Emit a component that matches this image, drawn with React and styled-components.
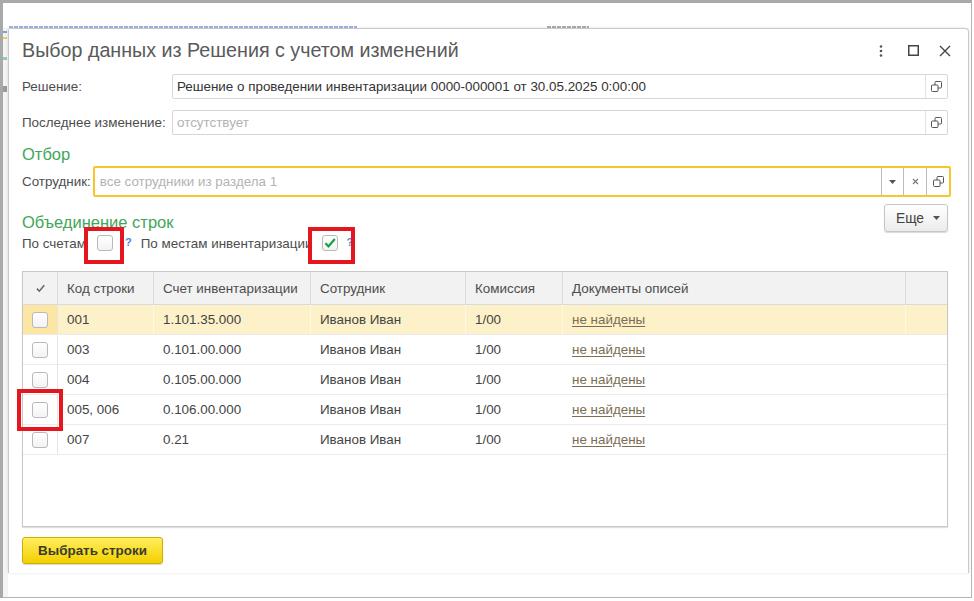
import React from 'react'
import styled, { createGlobalStyle, css } from 'styled-components'

const GlobalStyle = createGlobalStyle`
  html, body {
    margin: 0;
    padding: 0;
  }
  body {
    font-family: "Liberation Sans", Arial, sans-serif;
    font-size: 13.4px;
  }
  * {
    box-sizing: border-box;
  }
`

const Frame = styled.div`
  width: 974px;
  height: 601px;
  background: #fff;
  padding: 0 2px 3px 0;
`
const Screen = styled.div`
  height: 100%;
  background: #fff;
  border-top: 3px solid #a9a9a9;
  border-left: 3px solid #a9a9a9;
  border-right: 1px solid #b4b4b4;
  border-bottom: 1px solid #b4b4b4;
  display: flex;
  flex-direction: column;
  overflow: hidden;
`
const BackTop = styled.div`
  height: 25px;
  flex: none;
  display: flex;
  align-items: flex-end;
  padding-left: 6px;
  gap: 190px;
`
const BackLine = styled.div`
  width: ${p => p.$w}px;
  height: 2px;
  background: repeating-linear-gradient(90deg, ${p => p.$c} 0 4px, transparent 4px 5px);
  opacity: 0.55;
`
const Body = styled.div`
  flex: 1;
  display: flex;
  align-items: flex-start;
`
const LeftStrip = styled.div`
  width: 5px;
  align-self: stretch;
  background: #f4f4f4;
  display: flex;
  flex-direction: column;
  padding-top: 3px;
  gap: 4px;
`
const StripMark = styled.div`
  height: ${p => p.$h}px;
  width: 4px;
  background: ${p => p.$c};
  margin-top: ${p => p.$mt || 0}px;
`
const RightStrip = styled.div`
  width: 2px;
  align-self: stretch;
`

const Dialog = styled.div`
  width: 961px;
  height: 545px;
  flex: none;
  border: 1px solid #c9c9c9;
  border-bottom: none;
  border-radius: 2px 4px 0 0;
  box-shadow: 0 0 3px rgba(0, 0, 0, 0.12);
  padding: 0 20px 0 13px;
  display: flex;
  flex-direction: column;
  color: #4d4d4d;
`
const TitleRow = styled.div`
  height: 43px;
  display: flex;
  align-items: center;
  justify-content: space-between;
  margin-right: -4px;
`
const Title = styled.div`
  font-size: 19.7px;
  color: #5a5a5a;
`
const Controls = styled.div`
  display: flex;
  gap: 18px;
`
const CtrlIcon = styled.span`
  width: 14px;
  height: 14px;
  display: flex;
  align-items: center;
  justify-content: center;
  color: #444;
`

const FieldRow = styled.div`
  display: flex;
  align-items: center;
  margin-top: ${p => p.$mt}px;
`
const Label = styled.div`
  width: ${p => (p.$w ? `${p.$w}px` : 'auto')};
  flex: none;
  color: #4d4d4d;
  white-space: nowrap;
`
const Input = styled.div`
  flex: 1;
  height: ${p => (p.$focus ? 31 : 25)}px;
  display: flex;
  align-items: stretch;
  border: ${p => (p.$focus ? '2px solid #f7c62d' : '1px solid #d6d6d6')};
  border-radius: 2px;
  background: #fff;
  margin-left: ${p => (p.$focus ? 2 : 0)}px;
  margin-right: ${p => (p.$focus ? -3 : 0)}px;
`
const InputText = styled.div`
  flex: 1;
  display: flex;
  align-items: center;
  padding-left: ${p => (p.$focus ? 5 : 4)}px;
  color: ${p => (p.$empty ? '#b3b3b3' : '#333')};
  white-space: nowrap;
  overflow: hidden;
`
const InputBtn = styled.div`
  width: ${p => p.$w || 22}px;
  flex: none;
  display: flex;
  align-items: center;
  justify-content: center;
  border-left: 1px solid ${p => (p.$dark ? '#bdbdbd' : '#e2e2e2')};
  color: #555;
`

const GroupTitle = styled.div`
  height: 23px;
  line-height: 23px;
  font-size: 16.5px;
  color: #3fa65a;
  margin-top: ${p => p.$mt || 0}px;
`
const GroupRow = styled.div`
  display: flex;
  justify-content: space-between;
  align-items: flex-start;
  margin-top: 7px;
`
const GroupLeft = styled.div`
  padding-top: 7px;
`
const CheckRow = styled.div`
  height: 18px;
  display: flex;
  align-items: center;
`
const Help = styled.span`
  color: #4a86d6;
  font-size: 11px;
  font-weight: bold;
  margin: 0 9px 2px ${p => p.$ml}px;
`
const Box = styled.span`
  position: relative;
  width: 16px;
  height: 16px;
  flex: none;
  display: inline-flex;
  align-items: center;
  justify-content: center;
  border: 1px solid #b9b9b9;
  border-radius: 3px;
  background: linear-gradient(#fff, #f3f3f3);
  margin-left: ${p => p.$ml || 0}px;
`
const RedMark = styled.span`
  position: absolute;
  left: ${p => p.$l}px;
  top: ${p => p.$t}px;
  width: ${p => p.$w}px;
  height: ${p => p.$h}px;
  border: 4px solid #e4161f;
  pointer-events: none;
`
const MoreButton = styled.div`
  width: 64px;
  height: 28px;
  display: flex;
  align-items: center;
  justify-content: center;
  gap: 9px;
  padding-left: 4px;
  border: 1px solid #c6c6c6;
  border-radius: 3px;
  background: linear-gradient(#fff, #ebebeb);
  box-shadow: 0 1px 1px rgba(0, 0, 0, 0.15);
  color: #444;
  font-size: 13.8px;
`

const cols = '35px 96px 157px 155px 97px 343px 1fr'
const gridRow = css`
  display: grid;
  grid-template-columns: ${cols};
`
const Table = styled.div`
  margin-top: 19px;
  height: 256px;
  border: 1px solid #c8c8c8;
  box-shadow: 0 1px 1px rgba(0, 0, 0, 0.12);
`
const HeadRow = styled.div`
  ${gridRow};
  height: 33px;
  background: #f2f2f2;
  border-bottom: 1px solid #dadada;
`
const HeadCell = styled.div`
  display: flex;
  align-items: center;
  justify-content: ${p => (p.$center ? 'center' : 'flex-start')};
  padding-left: ${p => (p.$center ? 0 : 9)}px;
  border-right: 1px solid #dcdcdc;
  color: #4d4d4d;
  &:last-child {
    border-right: none;
  }
`
const Row = styled.div`
  ${gridRow};
  height: 30px;
  border-bottom: 1px solid #ebebeb;
  background: ${p => (p.$active ? '#fdf1c9' : '#fff')};
`
const Cell = styled.div`
  display: flex;
  align-items: center;
  justify-content: ${p => (p.$check ? 'center' : 'flex-start')};
  padding-left: ${p => (p.$check ? 0 : 9)}px;
  color: #444;
  white-space: nowrap;
  border-right: ${p =>
    p.$check ? '1px solid #e4e4e4' : p.$active ? '1px solid #fff8e2' : 'none'};
  background: ${p => (p.$check && p.$active ? '#fbe6a4' : 'transparent')};
  &:last-child {
    border-right: none;
  }
`
const Link = styled.span`
  color: #7b6e52;
  text-decoration: underline;
  text-underline-offset: 2px;
`

const Footer = styled.div`
  margin-top: 10px;
`
const PrimaryButton = styled.div`
  width: 141px;
  height: 27px;
  display: flex;
  align-items: center;
  justify-content: center;
  border: 1px solid #cfae00;
  border-radius: 3px;
  background: linear-gradient(#ffee5e, #f3d000);
  box-shadow: 0 1px 1px rgba(0, 0, 0, 0.15);
  color: #3b3b2a;
  font-weight: bold;
  font-size: 13.4px;
`

const CopyIcon = () => (
  <svg width="11" height="11" viewBox="0 0 11 11">
    <rect x="4" y="0.5" width="6.5" height="6.5" rx="1" fill="none" stroke="#555" />
    <rect x="0.5" y="4" width="6.5" height="6.5" rx="1" fill="#fff" stroke="#555" />
  </svg>
)
const DropIcon = () => (
  <svg width="7" height="4" viewBox="0 0 7 4">
    <path d="M0 0h7L3.5 4z" fill="#555" />
  </svg>
)
const ClearIcon = () => (
  <svg width="7" height="7" viewBox="0 0 7 7">
    <path d="M1 1l5 5M6 1L1 6" stroke="#777" strokeWidth="1.1" />
  </svg>
)
const CheckMark = ({ size = 14, color = '#17a03c', w = 2.2 }) => (
  <svg width={size} height={size} viewBox="0 0 14 14">
    <path d="M2.5 7.2l3 3.2L11.8 3" fill="none" stroke={color} strokeWidth={w} />
  </svg>
)

const rows = [
  ['001', '1.101.35.000'],
  ['003', '0.101.00.000'],
  ['004', '0.105.00.000'],
  ['005, 006', '0.106.00.000'],
  ['007', '0.21'],
]

export default function App() {
  return (
    <>
      <GlobalStyle />
      <Frame>
        <Screen>
          <BackTop>
            <BackLine $w={348} $c="#4f74c2" />
            <BackLine $w={42} $c="#666" />
          </BackTop>
          <Body>
            <LeftStrip>
              <StripMark $h={2} $c="#7f9fd8" />
              <StripMark $h={2} $c="#f0cf55" />
              <StripMark $h={3} $c="#8fd0a5" $mt={14} />
              <StripMark $h={6} $c="#9a9a9a" $mt={22} />
            </LeftStrip>
            <Dialog>
              <TitleRow>
                <Title>Выбор данных из Решения с учетом изменений</Title>
                <Controls>
                  <CtrlIcon>
                    <svg width="4" height="12" viewBox="0 0 4 12">
                      <circle cx="2" cy="1.5" r="1.3" fill="#555" />
                      <circle cx="2" cy="6" r="1.3" fill="#555" />
                      <circle cx="2" cy="10.5" r="1.3" fill="#555" />
                    </svg>
                  </CtrlIcon>
                  <CtrlIcon>
                    <svg width="11" height="11" viewBox="0 0 11 11">
                      <rect x="0.75" y="0.75" width="9.5" height="9.5" fill="none" stroke="#444" strokeWidth="1.5" />
                    </svg>
                  </CtrlIcon>
                  <CtrlIcon>
                    <svg width="12" height="12" viewBox="0 0 12 12">
                      <path d="M1 1l10 10M11 1L1 11" stroke="#444" strokeWidth="1.4" />
                    </svg>
                  </CtrlIcon>
                </Controls>
              </TitleRow>

              <FieldRow $mt={2}>
                <Label $w={150}>Решение:</Label>
                <Input>
                  <InputText>Решение о проведении инвентаризации 0000-000001 от 30.05.2025 0:00:00</InputText>
                  <InputBtn>
                    <CopyIcon />
                  </InputBtn>
                </Input>
              </FieldRow>

              <FieldRow $mt={11}>
                <Label $w={150}>Последнее изменение:</Label>
                <Input>
                  <InputText $empty>отсутствует</InputText>
                  <InputBtn>
                    <CopyIcon />
                  </InputBtn>
                </Input>
              </FieldRow>

              <GroupTitle $mt={8}>Отбор</GroupTitle>
              <FieldRow $mt={0}>
                <Label>Сотрудник:</Label>
                <Input $focus>
                  <InputText $focus $empty>все сотрудники из раздела 1</InputText>
                  <InputBtn $dark $w={22}>
                    <DropIcon />
                  </InputBtn>
                  <InputBtn $dark $w={23}>
                    <ClearIcon />
                  </InputBtn>
                  <InputBtn $dark $w={23}>
                    <CopyIcon />
                  </InputBtn>
                </Input>
              </FieldRow>

              <GroupRow>
                <GroupLeft>
                  <GroupTitle>Объединение строк</GroupTitle>
                  <CheckRow>
                    <Label>По счетам</Label>
                    <Box $ml={11}>
                      <RedMark $l={-14} $t={-9} $w={40} $h={37} />
                    </Box>
                    <Help $ml={12}>?</Help>
                    <Label>По местам инвентаризации</Label>
                    <Box $ml={10}>
                      <CheckMark />
                      <RedMark $l={-15} $t={-9} $w={47} $h={37} />
                    </Box>
                    <Help $ml={8}>?</Help>
                  </CheckRow>
                </GroupLeft>
                <MoreButton>
                  Еще
                  <DropIcon />
                </MoreButton>
              </GroupRow>

              <Table>
                <HeadRow>
                  <HeadCell $center>
                    <CheckMark size={11} color="#666" w={2} />
                  </HeadCell>
                  <HeadCell>Код строки</HeadCell>
                  <HeadCell>Счет инвентаризации</HeadCell>
                  <HeadCell>Сотрудник</HeadCell>
                  <HeadCell>Комиссия</HeadCell>
                  <HeadCell>Документы описей</HeadCell>
                  <HeadCell />
                </HeadRow>
                {rows.map(([code, account], i) => (
                  <Row key={code} $active={i === 0}>
                    <Cell $check $active={i === 0}>
                      <Box>
                        {i === 3 && <RedMark $l={-16} $t={-14} $w={46} $h={42} />}
                      </Box>
                    </Cell>
                    <Cell $active={i === 0}>{code}</Cell>
                    <Cell $active={i === 0}>{account}</Cell>
                    <Cell $active={i === 0}>Иванов Иван</Cell>
                    <Cell $active={i === 0}>1/00</Cell>
                    <Cell $active={i === 0}>
                      <Link>не найдены</Link>
                    </Cell>
                    <Cell />
                  </Row>
                ))}
              </Table>

              <Footer>
                <PrimaryButton>Выбрать строки</PrimaryButton>
              </Footer>
            </Dialog>
            <RightStrip />
          </Body>
        </Screen>
      </Frame>
    </>
  )
}
